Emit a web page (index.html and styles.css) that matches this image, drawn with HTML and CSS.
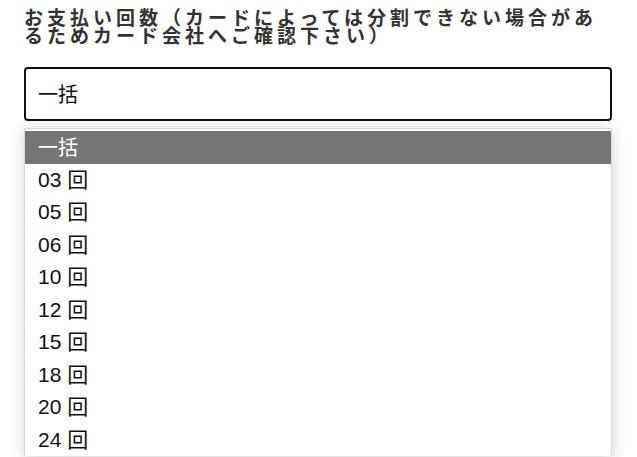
FILE: index.html
```html
<!DOCTYPE html>
<html lang="ja">
<head>
<meta charset="utf-8">
<link rel="stylesheet" href="styles.css">
</head>
<body>
<div class="field">
  <label class="label">お支払い回数（カードによっては分割できない場合があるためカード会社へご確認下さい）</label>
  <div class="select-box">一括</div>
  <ul class="dropdown">
    <li class="opt selected">一括</li>
    <li class="opt">03 回</li>
    <li class="opt">05 回</li>
    <li class="opt">06 回</li>
    <li class="opt">10 回</li>
    <li class="opt">12 回</li>
    <li class="opt">15 回</li>
    <li class="opt">18 回</li>
    <li class="opt">20 回</li>
    <li class="opt">24 回</li>
  </ul>
</div>
</body>
</html>
```

FILE: styles.css
```css
html, body {
  margin: 0;
  padding: 0;
  background: #fff;
  overflow: hidden;
  height: 457px;
}
.field {
  padding: 8px 25px 0 24px;
  display: flex;
  flex-direction: column;
}
.label {
  font-family: "Noto Sans CJK JP", "Noto Sans", sans-serif;
  font-weight: 700;
  font-size: 19px;
  line-height: 18px;
  letter-spacing: 4px;
  color: #333;
  display: block;
}
.select-box {
  margin-top: 23px;
  height: 50px;
  box-sizing: content-box;
  border: 2px solid #111;
  border-radius: 4px;
  padding: 0 12px;
  font-family: "Noto Sans CJK JP", sans-serif;
  font-size: 20px;
  line-height: 50px;
  color: #111;
}
.dropdown {
  list-style: none;
  margin: 7px 0 0 0;
  padding: 2px 0 0 0;
  border: 1px solid #d8d8d8;
  border-bottom: none;
  box-shadow: 0 2px 14px rgba(0,0,0,0.18);
  background: #fff;
}
.opt {
  height: 32.56px;
  line-height: 32.56px;
  padding-left: 13px;
  font-family: "Liberation Sans", "Noto Sans CJK JP", sans-serif;
  font-size: 21px;
  color: #111;
}
.opt.selected {
  background: #757575;
  color: #fff;
  font-family: "Noto Sans CJK JP", sans-serif;
  font-size: 20px;
}
```
